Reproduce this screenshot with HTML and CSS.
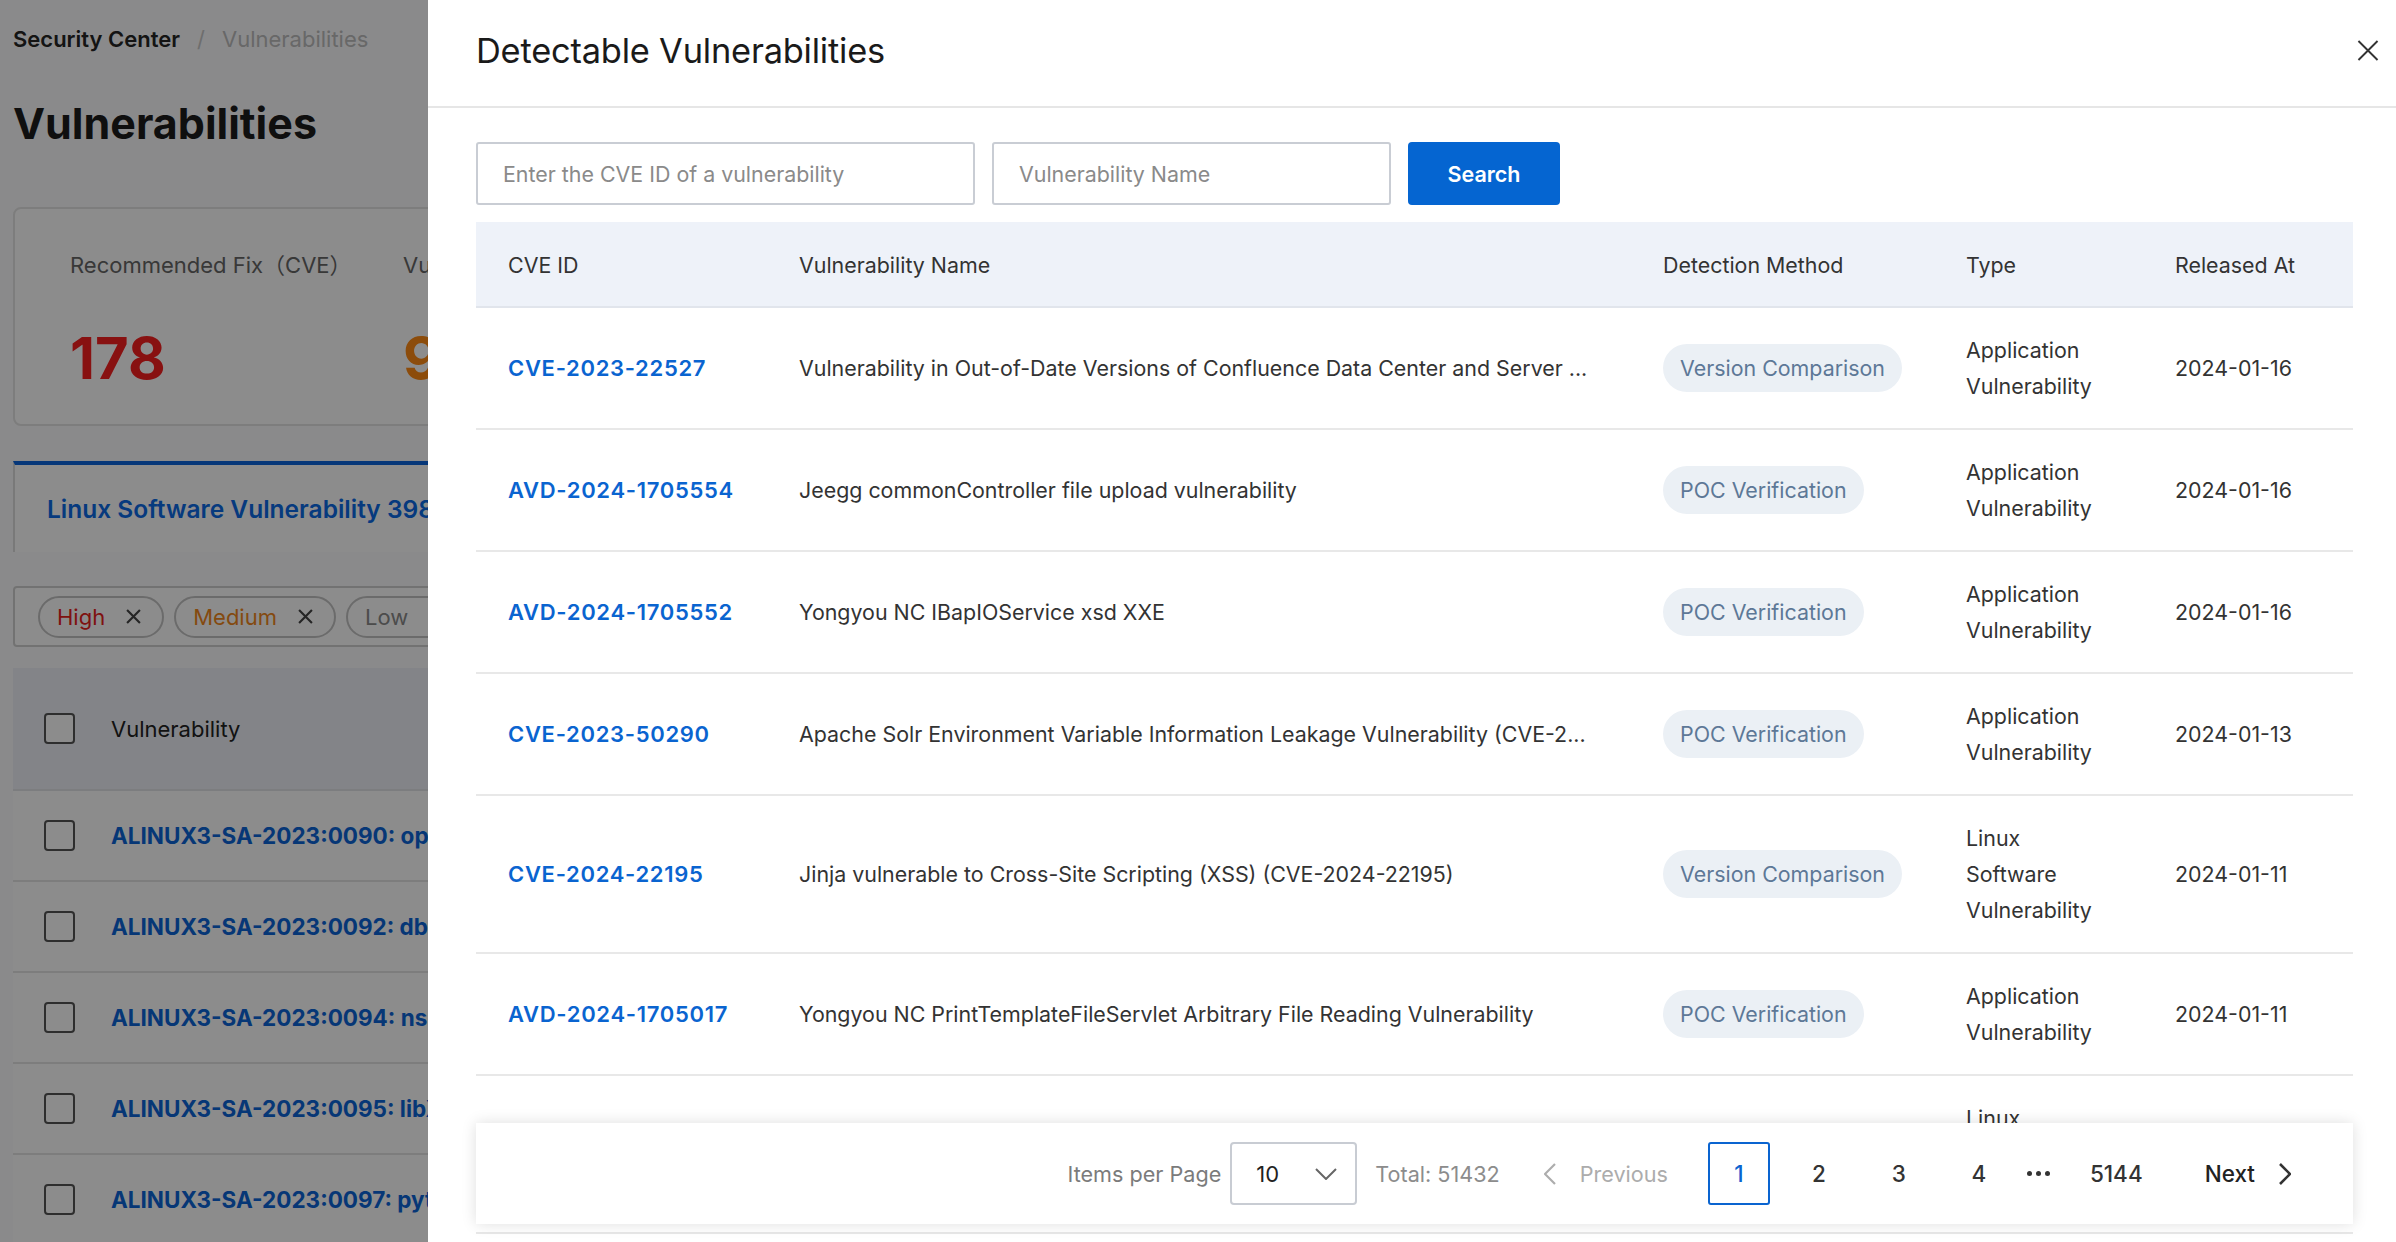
FILE: index.html
```html
<!DOCTYPE html>
<html lang="en">
<head>
<meta charset="utf-8">
<title>Detectable Vulnerabilities</title>
<link rel="stylesheet" href="styles.css">
</head>
<body>
<div class="app">
  <div class="breadcrumb">
    <span class="crumb-root">Security Center</span>
    <span class="crumb-sep">/</span>
    <span class="crumb-cur">Vulnerabilities</span>
  </div>
  <h1 class="page-title">Vulnerabilities</h1>
  <div class="stat-card">
    <div class="stat">
      <div class="stat-label">Recommended Fix（CVE）</div>
      <div class="stat-num red">178</div>
    </div>
    <div class="stat">
      <div class="stat-label">Vulnerabilities</div>
      <div class="stat-num orange">98</div>
    </div>
  </div>
  <div class="tabs">
    <div class="tab active">Linux Software Vulnerability 398</div>
  </div>
  <div class="filter">
    <span class="ftag high">High <svg class="fx" viewBox="0 0 14 14"><path d="M1 1L13 13M13 1L1 13"/></svg></span>
    <span class="ftag medium">Medium <svg class="fx" viewBox="0 0 14 14"><path d="M1 1L13 13M13 1L1 13"/></svg></span>
    <span class="ftag low">Low <svg class="fx" viewBox="0 0 14 14"><path d="M1 1L13 13M13 1L1 13"/></svg></span>
  </div>
  <div class="ltable">
    <div class="lrow lhead"><span class="cb"></span><span>Vulnerability</span></div>
    <div class="lrow"><span class="cb"></span><span class="llink">ALINUX3-SA-2023:0090: openssh</span></div>
    <div class="lrow"><span class="cb"></span><span class="llink">ALINUX3-SA-2023:0092: dbus</span></div>
    <div class="lrow"><span class="cb"></span><span class="llink">ALINUX3-SA-2023:0094: nss</span></div>
    <div class="lrow"><span class="cb"></span><span class="llink">ALINUX3-SA-2023:0095: libX11</span></div>
    <div class="lrow"><span class="cb"></span><span class="llink">ALINUX3-SA-2023:0097: python3</span></div>
  </div>
</div>

<div class="mask"></div>

<aside class="drawer">
  <header class="drawer-header">
    <h2 class="drawer-title">Detectable Vulnerabilities</h2>
    <svg class="close" viewBox="0 0 22 22"><path d="M1 1L21 21M21 1L1 21"/></svg>
  </header>
  <div class="drawer-body">
    <div class="search-row">
      <div class="input cve">Enter the CVE ID of a vulnerability</div>
      <div class="input name">Vulnerability Name</div>
      <div class="btn">Search</div>
    </div>
    <table class="vt">
      <colgroup>
        <col class="c1"><col class="c2"><col class="c3"><col class="c4"><col class="c5">
      </colgroup>
      <thead>
        <tr><th>CVE ID</th><th>Vulnerability Name</th><th>Detection Method</th><th>Type</th><th>Released At</th></tr>
      </thead>
      <tbody>
        <tr>
          <td><span class="cve-link">CVE-2023-22527</span></td>
          <td class="name">Vulnerability in Out-of-Date Versions of Confluence Data Center and Server ...</td>
          <td><span class="pill">Version Comparison</span></td>
          <td><div class="type">Application Vulnerability</div></td>
          <td>2024-01-16</td>
        </tr>
        <tr>
          <td><span class="cve-link">AVD-2024-1705554</span></td>
          <td class="name">Jeegg commonController file upload vulnerability</td>
          <td><span class="pill">POC Verification</span></td>
          <td><div class="type">Application Vulnerability</div></td>
          <td>2024-01-16</td>
        </tr>
        <tr>
          <td><span class="cve-link">AVD-2024-1705552</span></td>
          <td class="name">Yongyou NC IBapIOService xsd XXE</td>
          <td><span class="pill">POC Verification</span></td>
          <td><div class="type">Application Vulnerability</div></td>
          <td>2024-01-16</td>
        </tr>
        <tr>
          <td><span class="cve-link">CVE-2023-50290</span></td>
          <td class="name">Apache Solr Environment Variable Information Leakage Vulnerability (CVE-2...</td>
          <td><span class="pill">POC Verification</span></td>
          <td><div class="type">Application Vulnerability</div></td>
          <td>2024-01-13</td>
        </tr>
        <tr>
          <td><span class="cve-link">CVE-2024-22195</span></td>
          <td class="name">Jinja vulnerable to Cross-Site Scripting (XSS) (CVE-2024-22195)</td>
          <td><span class="pill">Version Comparison</span></td>
          <td><div class="type">Linux Software Vulnerability</div></td>
          <td>2024-01-11</td>
        </tr>
        <tr>
          <td><span class="cve-link">AVD-2024-1705017</span></td>
          <td class="name">Yongyou NC PrintTemplateFileServlet Arbitrary File Reading Vulnerability</td>
          <td><span class="pill">POC Verification</span></td>
          <td><div class="type">Application Vulnerability</div></td>
          <td>2024-01-11</td>
        </tr>
        <tr>
          <td></td>
          <td class="name"></td>
          <td></td>
          <td><div class="type">Linux Software Vulnerability</div></td>
          <td></td>
        </tr>
      </tbody>
    </table>

    <div class="pager">
      <span class="pp-label">Items per Page</span>
      <div class="pp-select">
        <span class="pp-val">10</span>
        <svg class="pp-caret" viewBox="0 0 22 12"><path d="M1 1l10 10 10-10"/></svg>
      </div>
      <span class="pp-total">Total: 51432</span>
      <span class="pp-prev">
        <svg class="chev prev" viewBox="0 0 12 22"><path d="M11 1L1 11l10 10"/></svg>
        <span class="pp-prev-text">Previous</span>
      </span>
      <span class="pp-page active">1</span>
      <span class="pp-page">2</span>
      <span class="pp-page">3</span>
      <span class="pp-page">4</span>
      <span class="pp-dots"><i></i><i></i><i></i></span>
      <span class="pp-page last">5144</span>
      <span class="pp-next">
        <span>Next</span>
        <svg class="chev next" viewBox="0 0 12 22"><path d="M1 1l10 10L1 21"/></svg>
      </span>
    </div>
  </div>
</aside>
</body>
</html>
```

FILE: styles.css
```css
* { box-sizing: border-box; }
html, body { margin: 0; padding: 0; }
body {
  width: 2396px;
  height: 1242px;
  overflow: hidden;
  position: relative;
  background: #fcfcfd;
  color: #333;
  font-family: Inter, "Noto Sans CJK SC", sans-serif;
}

/* ---------- background page ---------- */
.app {
  width: 428px;
  height: 1242px;
  overflow: hidden;
  white-space: nowrap;
  padding: 18px 0 0 13px;
}
.breadcrumb {
  display: flex;
  align-items: center;
  height: 42px;
  font-size: 22px;
  gap: 17px;
}
.crumb-root { font-weight: 600; color: #262626; }
.crumb-sep { color: #c8c8c8; }
.crumb-cur { color: #bdbdbd; }
.page-title {
  margin: 35px 0 0;
  font-size: 43px;
  line-height: 56px;
  font-weight: 700;
  color: #1d1d1d;
}
.stat-card {
  margin-top: 56px;
  width: 1200px;
  height: 219px;
  border: 2px solid #e3e3e3;
  border-radius: 8px;
  background: #fff;
  display: flex;
  padding: 41px 0 0 55px;
}
.stat { width: 333px; flex: none; }
.stat-label {
  font-size: 22px;
  line-height: 30px;
  color: #666;
}
.stat-num {
  margin-top: 46px;
  font-size: 58px;
  line-height: 64px;
  font-weight: 700;
}
.red { color: #f71f1f; }
.orange { color: #ff8a14; }
.tabs {
  margin-top: 35px;
  display: flex;
  height: 91px;
}
.tab {
  width: 520px;
  flex: none;
  display: flex;
  align-items: center;
  padding-left: 32px;
  font-size: 24.5px;
  font-weight: 600;
  color: #0b6ae6;
  border-top: 4px solid #0b65dd;
  border-left: 2px solid #dcdcdc;
  background: #fff;
}
.filter {
  margin-top: 34px;
  width: 1400px;
  height: 61px;
  border: 2px solid #d0d0d0;
  border-radius: 4px;
  background: #fff;
  display: flex;
  align-items: center;
  gap: 10px;
  padding-left: 23px;
}
.ftag {
  height: 42px;
  border: 2px solid #c4c4c4;
  border-radius: 21px;
  display: inline-flex;
  align-items: center;
  gap: 21px;
  padding: 0 21px 0 17px;
  font-size: 22px;
  flex: none;
}
.ftag.high { color: #e8211d; }
.ftag.medium { color: #f0871d; }
.ftag.low { color: #8a8a8a; }
.fx { width: 15px; height: 15px; fill: none; stroke: #444; stroke-width: 2; }
.ltable { margin-top: 21px; width: 1400px; }
.lrow {
  display: flex;
  align-items: center;
  height: 91px;
  border-bottom: 2px solid #e4e4e4;
  font-size: 22px;
  padding-left: 31px;
  gap: 36px;
  background: #fff;
}
.lrow.lhead {
  height: 123px;
  background: #eef1f7;
  border-bottom: 2px solid #e2e4e8;
  color: #222;
}
.cb {
  width: 31px;
  height: 31px;
  border: 2px solid #555;
  border-radius: 4px;
  background: #fff;
  flex: none;
}
.llink {
  color: #0b64d8;
  font-weight: 700;
  font-size: 22.5px;
}

/* ---------- mask ---------- */
.mask {
  position: fixed;
  inset: 0;
  background: rgba(0, 0, 0, 0.45);
}

/* ---------- drawer ---------- */
.drawer {
  position: fixed;
  top: 0;
  right: 0;
  width: 1968px;
  height: 1242px;
  background: #fff;
  display: flex;
  flex-direction: column;
  overflow: hidden;
}
.drawer-header {
  flex: none;
  height: 108px;
  border-bottom: 2px solid #e6e6e6;
  display: flex;
  align-items: center;
  justify-content: space-between;
  padding: 0 17px 6px 48px;
}
.drawer-title {
  margin: 0;
  font-size: 34.4px;
  font-weight: 400;
  color: #1a1a1a;
  letter-spacing: -0.2px;
}
.close {
  width: 22px;
  height: 21px;
  fill: none;
  stroke: #333;
  stroke-width: 2;
}
.drawer-body {
  position: relative;
  flex: 1;
  overflow: hidden;
  padding: 34px 43px 0 48px;
}
.search-row {
  display: flex;
  gap: 17px;
  height: 63px;
}
.input {
  width: 499px;
  border: 2px solid #c9cdd4;
  border-radius: 3px;
  display: flex;
  align-items: center;
  padding: 0 25px;
  font-size: 21.4px;
  color: #8a8a8a;
}
.input.name { width: 399px; }
.btn {
  width: 152px;
  border-radius: 4px;
  background: #0565d1;
  color: #fff;
  font-size: 21.5px;
  font-weight: 600;
  display: flex;
  align-items: center;
  justify-content: center;
}

.vt {
  margin-top: 17px;
  width: 1877px;
  table-layout: fixed;
  border-collapse: separate;
  border-spacing: 0;
  font-size: 21.4px;
}
.vt col.c1 { width: 291px; }
.vt col.c2 { width: 864px; }
.vt col.c3 { width: 303px; }
.vt col.c4 { width: 209px; }
.vt col.c5 { width: 210px; }
.vt th {
  height: 86px;
  background: #eef2f9;
  border-bottom: 2px solid #e1e5ec;
  text-align: left;
  font-weight: 400;
  color: #333;
  padding: 2px 10px 0 32px;
}
.vt td {
  padding: 24px 10px 24px 32px;
  line-height: 36px;
  border-bottom: 2px solid #e8e8e8;
  vertical-align: middle;
  color: #333;
}
.vt td.name { white-space: nowrap; overflow: hidden; }
.cve-link {
  color: #0a64d0;
  font-weight: 600;
  font-size: 22px;
  letter-spacing: 0.7px;
}
.pill {
  display: inline-flex;
  align-items: center;
  height: 48px;
  padding: 0 17px;
  border-radius: 24px;
  background: #ebf0f5;
  color: #5d7897;
}
.type { max-width: 132px; }

/* ---------- pager ---------- */
.pager {
  position: absolute;
  left: 48px;
  right: 43px;
  bottom: 18px;
  height: 101px;
  background: #fff;
  box-shadow: 0 0 14px rgba(0, 0, 0, 0.13);
  display: flex;
  align-items: center;
  justify-content: flex-end;
  padding-right: 62px;
  font-size: 21.6px;
}
.pp-label { color: #7b7b7b; }
.pp-select {
  margin-left: 9px;
  width: 127px;
  height: 63px;
  border: 2px solid #c8ccd3;
  border-radius: 4px;
  display: flex;
  align-items: center;
  justify-content: space-between;
  padding: 0 18px 0 24px;
}
.pp-val { color: #222; font-size: 22px; }
.pp-caret { width: 22px; height: 12px; fill: none; stroke: #666; stroke-width: 2; }
.pp-total { margin-left: 18px; color: #8c8c8c; }
.pp-prev {
  margin-left: 44px;
  display: inline-flex;
  align-items: center;
  color: #acacac;
}
.pp-prev-text { margin-left: 24px; }
.chev { width: 12px; height: 22px; fill: none; stroke-width: 2.2; }
.chev.prev { stroke: #adadad; }
.chev.next { stroke: #333; stroke-width: 2.6; }
.pp-page {
  margin-left: 18px;
  min-width: 62px;
  height: 63px;
  display: inline-flex;
  align-items: center;
  justify-content: center;
  font-size: 22.5px;
  font-weight: 500;
  color: #333;
  border: 2px solid transparent;
  border-radius: 3px;
}
.pp-page.active {
  margin-left: 40px;
  border-color: #0a64d0;
  color: #0a64d0;
}
.pp-page.last {
  margin-left: 30px;
  padding: 0 8px;
}
.pp-dots {
  margin-left: 17px;
  display: inline-flex;
  gap: 4px;
}
.pp-dots i {
  width: 5px;
  height: 5px;
  border-radius: 50%;
  background: #333;
}
.pp-next {
  margin-left: 52px;
  display: inline-flex;
  align-items: center;
  gap: 24px;
  font-size: 22.5px;
  font-weight: 500;
  color: #222;
}
```
